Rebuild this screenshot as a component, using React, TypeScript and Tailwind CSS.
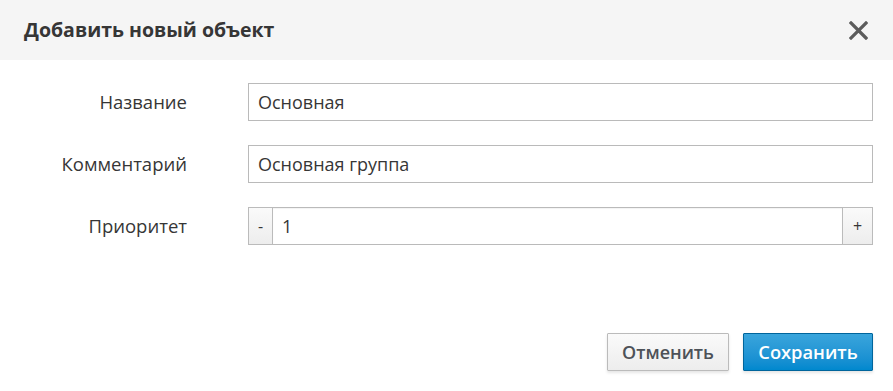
import { useState } from "react";

type FieldProps = {
  label: string;
  children: React.ReactNode;
};

function Field({ label, children }: FieldProps) {
  return (
    <div className="flex items-center">
      <label className="w-[187px] shrink-0 text-right text-[18.5px] font-medium text-[#363636]">
        {label}
      </label>
      <div className="ml-[61px] flex-1">{children}</div>
    </div>
  );
}

function TextInput({ value }: { value: string }) {
  return (
    <input
      defaultValue={value}
      className="h-[38px] w-full border border-[#bababa] bg-white px-[9px] text-[18px] text-[#363636] outline-none"
    />
  );
}

export default function App() {
  const [priority, setPriority] = useState(1);

  return (
    <div className="flex h-[391px] w-[893px] flex-col bg-white font-['Open_Sans',sans-serif]">
      <div className="flex h-[60px] shrink-0 items-center justify-between bg-[#f5f5f5] pl-6 pr-[25px]">
        <h4 className="text-[19.5px] font-bold text-[#363636]">Добавить новый объект</h4>
        <button className="text-[#5c5c5c]">
          <svg width="19" height="19" viewBox="0 0 19 19">
            <path d="M2 2 L17 17 M17 2 L2 17" stroke="currentColor" strokeWidth="3.2" strokeLinecap="square" />
          </svg>
        </button>
      </div>

      <div className="flex flex-col gap-6 pr-5 pt-[23px]">
        <Field label="Название">
          <TextInput value="Основная" />
        </Field>
        <Field label="Комментарий">
          <TextInput value="Основная группа" />
        </Field>
        <Field label="Приоритет">
          <div className="flex h-[38px]">
            <button
              onClick={() => setPriority((p) => p - 1)}
              className="w-[25px] border border-[#bbbbbb] bg-gradient-to-b from-[#fafafa] to-[#ededed] text-[16px] text-[#363636]"
            >
              -
            </button>
            <input
              value={priority}
              onChange={(e) => setPriority(Number(e.target.value) || 0)}
              className="min-w-0 flex-1 border-y border-[#bababa] bg-white px-[9px] text-[18px] text-[#363636] shadow-[inset_0_1px_1px_rgba(0,0,0,0.05)] outline-none"
            />
            <button
              onClick={() => setPriority((p) => p + 1)}
              className="w-[31px] border border-[#bbbbbb] bg-gradient-to-b from-[#fafafa] to-[#ededed] text-[16px] text-[#363636]"
            >
              +
            </button>
          </div>
        </Field>
      </div>

      <div className="mt-auto flex justify-end gap-[14px] pb-5 pr-5">
        <button className="h-[38px] w-[122px] rounded-[1px] border border-[#bbbbbb] bg-gradient-to-b from-[#fafafa] to-[#ededed] text-[18px] font-semibold text-[#4d5258] shadow-[0_2px_3px_rgba(3,3,3,0.1)]">
          Отменить
        </button>
        <button className="h-[38px] w-[130px] rounded-[1px] border border-[#00659c] bg-gradient-to-b from-[#39a5dc] to-[#0088ce] text-[18.3px] font-semibold text-white shadow-[0_2px_3px_rgba(3,3,3,0.1)]">
          Сохранить
        </button>
      </div>
    </div>
  );
}
